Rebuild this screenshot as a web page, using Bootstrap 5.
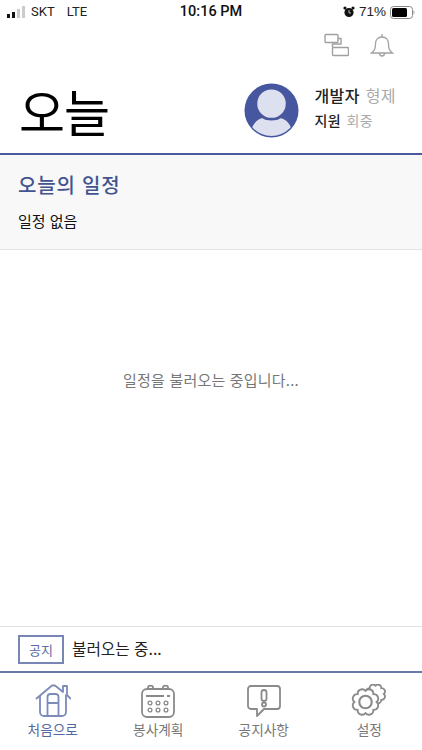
<!doctype html>
<html lang="ko"><head><meta charset="utf-8">
<link href="https://cdn.jsdelivr.net/npm/bootstrap@5.3.0/dist/css/bootstrap.min.css" rel="stylesheet">
<style>
html,body{height:750px;overflow:hidden;background:#fff}
body{font-family:"Noto Sans CJK KR","Noto Sans",sans-serif;width:422px;display:flex;flex-direction:column;color:#000}
.status-strip{height:26px;padding:0 7px 2px 7px;font-family:"Liberation Sans",sans-serif;font-size:13.5px;line-height:24px;color:#222}
.status-side{width:140px}
.carrier-text{font-family:Roboto,sans-serif;font-size:13px}
.time-text{font-family:Roboto,sans-serif;font-size:14.5px;font-weight:500;color:#111}
.sig{gap:2px;align-items:flex-end;height:12px;margin-right:2px}
.sig i{display:block;width:3px;background:#111}
.sig i.off{background:#ccc}
.bar-a{height:4px}.bar-b{height:6px}.bar-c{height:9px}.bar-d{height:12px}
.action-row{height:38px;padding-right:27px;gap:20px}
.head-row{height:91px;padding:4px 26px 0 19px;border-bottom:2px solid #4a5a9e}
.big-title{font-size:50px;line-height:1;font-weight:400;margin:0 0 2px;letter-spacing:-1px}
.who{font-size:16px;line-height:25px;font-weight:500;color:#222;padding-bottom:6px;letter-spacing:.4px}
.who span{font-weight:400;color:#aaa;margin-left:1px}
.who-sub{font-size:14px}
.today-box{height:95px;background:#f8f8f8;border-bottom:1px solid #e2e2e2;padding:17px 18px 0}
.today-title{font-size:20px;line-height:26px;font-weight:500;color:#43548f;margin:0 0 12px;letter-spacing:.8px}
.today-empty{font-size:15px;line-height:22px;color:#111}
.load-area{flex:1;color:#777;font-size:15px;letter-spacing:.2px;padding-bottom:116px}
.notice-row{height:47px;border-top:1px solid #e2e2e2;border-bottom:2px solid #6a78ac;padding:0 18px;gap:8px}
.notice-tag{width:46px;height:29px;border:2px solid #7786b4;color:#5b6ca5;font-size:13px;line-height:25px;text-align:center}
.notice-text{font-size:15.7px;color:#222}
.tab-row{height:77px;padding-top:11px}
.tab-cell{width:25%;color:#777;font-size:13.7px;line-height:18px}
.tab-cell.on{color:#5567a0}
.tab-cell svg{display:block;margin-bottom:2px}
</style></head><body>
<div class="status-strip d-flex align-items-center justify-content-between">
 <div class="status-side carrier-text d-flex align-items-center gap-1">
  <div class="sig d-flex"><i class="bar-a"></i><i class="bar-b"></i><i class="bar-c off"></i><i class="bar-d off"></i></div>
  <span>SKT</span><span class="ms-2">LTE</span>
 </div>
 <div class="time-text">10:16 PM</div>
 <div class="status-side d-flex align-items-center justify-content-end">
  <svg width="12" height="12" viewBox="0 0 12 12" class="me-1"><circle cx="6" cy="6.500" r="4.600" fill="#111"/><circle cx="2" cy="2" r="1.600" fill="#111"/><circle cx="10" cy="2" r="1.600" fill="#111"/><path d="M6 4v3h2" fill="none" stroke="#fff" stroke-width=".7"/></svg>
  <span>71%</span>
  <svg width="25" height="13" viewBox="0 0 25 13" class="ms-1"><rect x=".5" y=".5" width="22" height="12" rx="3" fill="none" stroke="#888"/><rect x="2" y="2" width="15" height="9" rx="1.500" fill="#000"/><path d="M23.500 4.500c1.300.3 1.300 3.700 0 4z" fill="#999"/></svg>
 </div>
</div>
<div class="action-row d-flex align-items-center justify-content-end">
 <svg width="26" height="26" viewBox="0 0 26 26" fill="none" stroke="#a0a0a0" stroke-width="1.400"><rect x="2" y="2.500" width="13" height="8" rx="1"/><rect x="9.500" y="15.500" width="16" height="8" rx="1"/><path d="M15 6.500h3v5.500H9.500v3.500"/></svg>
 <svg width="26" height="26" viewBox="0 0 26 26" fill="none" stroke="#a0a0a0" stroke-width="1.300"><path d="M2.500 21c3-2.500 4-4 4-9 0-4 2.500-7 6.500-7s6.500 3 6.500 7c0 5 1 6.500 4 9z"/><path d="M13 2v3M10.500 21c0 4 5 4 5 0"/></svg>
</div>
<div class="head-row d-flex align-items-center justify-content-between">
 <h1 class="big-title">오늘</h1>
 <div class="d-flex align-items-center gap-3">
  <svg width="55" height="55" viewBox="0 0 56 56"><defs><clipPath id="avatarclip"><circle cx="28" cy="28" r="26"/></clipPath></defs><circle cx="28" cy="28" r="27.500" fill="#46579f"/><g clip-path="url(#avatarclip)" fill="#dde0ee"><circle cx="28" cy="21" r="14.500"/><path d="M6 56c0-13 8-20 13-20 3 3 15 3 18 0 5 0 13 7 13 20z"/></g></svg>
  <div class="who"><div>개발자 <span>형제</span></div><div class="who-sub">지원 <span>회중</span></div></div>
 </div>
</div>
<div class="today-box">
 <h2 class="today-title">오늘의 일정</h2>
 <div class="today-empty">일정 없음</div>
</div>
<div class="load-area d-flex align-items-center justify-content-center">일정을 불러오는 중입니다...</div>
<div class="notice-row d-flex align-items-center">
 <div class="notice-tag">공지</div><div class="notice-text">불러오는 중...</div>
</div>
<div class="tab-row d-flex">
 <div class="tab-cell on d-flex flex-column align-items-center">
  <svg width="36" height="34" viewBox="0 0 36 34" fill="none" stroke="#7c8bb8" stroke-width="1.800" stroke-linejoin="round" stroke-linecap="round"><path d="M1.500 14.500 17 1.500h3l8 6.500V2h4v9l3.500 3.500"/><path d="M5 12.500V28a4 4 0 0 0 4 4h18a4 4 0 0 0 4-4V11"/><path d="M12.500 32V13a3 3 0 0 1 3-3h5a3 3 0 0 1 3 3v19M12.500 19h11"/></svg>
  처음으로</div>
 <div class="tab-cell d-flex flex-column align-items-center">
  <svg width="36" height="34" viewBox="0 0 36 34" fill="none" stroke="#8a8a8a" stroke-width="1.800"><rect x="2" y="5" width="32" height="28" rx="5"/><path d="M8 5V3.500c0-2.500 5-2.500 5 0V5M23 5V3.500c0-2.500 5-2.500 5 0V5M6 12h18M27 12h3"/><g stroke-width="1.300"><circle cx="10" cy="19" r="1.900"/><circle cx="18" cy="19" r="1.900"/><circle cx="26" cy="19" r="1.900"/><circle cx="10" cy="26" r="1.900"/><circle cx="18" cy="26" r="1.900"/><circle cx="26" cy="26" r="1.900"/></g></svg>
  봉사계획</div>
 <div class="tab-cell d-flex flex-column align-items-center">
  <svg width="36" height="34" viewBox="0 0 36 34" fill="none" stroke="#8a8a8a" stroke-width="1.800" stroke-linejoin="round"><path d="M5 2h26a3 3 0 0 1 3 3v17a3 3 0 0 1-3 3H18l-7 7v-7H5a3 3 0 0 1-3-3V5a3 3 0 0 1 3-3z"/><rect x="15.500" y="6" width="5" height="11" rx="2.500"/><circle cx="18" cy="20.500" r="2"/></svg>
  공지사항</div>
 <div class="tab-cell d-flex flex-column align-items-center">
  <svg width="36" height="34" viewBox="0 0 36 34" stroke="#8a8a8a" stroke-width="1.800"><g transform="translate(24.500 10) scale(.83)" fill="#fff"><path vector-effect="non-scaling-stroke" d="M10 0A4 4 0 0 1 7 7A4 4 0 0 1 0 10A4 4 0 0 1-7 7A4 4 0 0 1-10 0A4 4 0 0 1-7-7A4 4 0 0 1 0-10A4 4 0 0 1 7-7A4 4 0 0 1 10 0z"/></g><g transform="translate(14.500 18) scale(.89)" fill="#fff"><path vector-effect="non-scaling-stroke" d="M12.500 0A5 5 0 0 1 8.800 8.800A5 5 0 0 1 0 12.500A5 5 0 0 1-8.800 8.800A5 5 0 0 1-12.500 0A5 5 0 0 1-8.800-8.800A5 5 0 0 1 0-12.500A5 5 0 0 1 8.800-8.800A5 5 0 0 1 12.500 0z"/><circle r="7" stroke-width="2.400" fill="none"/></g></svg>
  설정</div>
</div>
<script src="https://cdn.jsdelivr.net/npm/bootstrap@5.3.0/dist/js/bootstrap.bundle.min.js"></script>
</body></html>
